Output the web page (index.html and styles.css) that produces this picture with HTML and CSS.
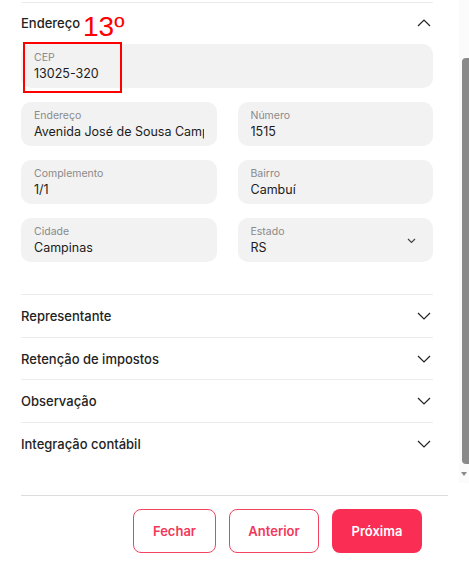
FILE: index.html
```html
<!DOCTYPE html>
<html lang="pt-BR">
<head>
  <meta charset="UTF-8" />
  <title>Cadastro - Endereço</title>
  <link rel="stylesheet" href="styles.css">
</head>
<body>
  <div class="panel">
    <!-- Endereço -->
    <section class="group open">
      <div class="group-head">
        <span>Endereço</span>
        <svg class="chev" width="14" height="8" viewBox="0 0 14 8"><path d="M1 7 L7 1 L13 7" fill="none" stroke="#222" stroke-width="1.2"/></svg>
      </div>
      <div class="fields">
        <div class="field full">
          <label>CEP</label>
          <div class="value">13025-320</div>
        </div>
        <div class="field">
          <label>Endereço</label>
          <div class="value">Avenida José de Sousa Campos</div>
        </div>
        <div class="field">
          <label>Número</label>
          <div class="value">1515</div>
        </div>
        <div class="field">
          <label>Complemento</label>
          <div class="value">1/1</div>
        </div>
        <div class="field">
          <label>Bairro</label>
          <div class="value">Cambuí</div>
        </div>
        <div class="field">
          <label>Cidade</label>
          <div class="value">Campinas</div>
        </div>
        <div class="field select">
          <label>Estado</label>
          <div class="value">RS</div>
          <svg class="select-chev" width="9" height="6" viewBox="0 0 9 6"><path d="M1 1 L4.5 4.5 L8 1" fill="none" stroke="#444" stroke-width="1.2"/></svg>
        </div>
      </div>
      <div class="mark"></div>
      <div class="mark-num">13º</div>
    </section>

    <section class="group"><div class="group-head"><span>Representante</span><svg class="chev" width="14" height="8" viewBox="0 0 14 8"><path d="M1 1 L7 7 L13 1" fill="none" stroke="#222" stroke-width="1.2"/></svg></div></section>
    <section class="group"><div class="group-head"><span>Retenção de impostos</span><svg class="chev" width="14" height="8" viewBox="0 0 14 8"><path d="M1 1 L7 7 L13 1" fill="none" stroke="#222" stroke-width="1.2"/></svg></div></section>
    <section class="group"><div class="group-head"><span>Observação</span><svg class="chev" width="14" height="8" viewBox="0 0 14 8"><path d="M1 1 L7 7 L13 1" fill="none" stroke="#222" stroke-width="1.2"/></svg></div></section>
    <section class="group"><div class="group-head"><span>Integração contábil</span><svg class="chev" width="14" height="8" viewBox="0 0 14 8"><path d="M1 1 L7 7 L13 1" fill="none" stroke="#222" stroke-width="1.2"/></svg></div></section>

    <div class="scrollbar">
      <div class="thumb"></div>
      <div class="arrow"></div>
    </div>
  </div>

  <footer>
    <button class="btn outline">Fechar</button>
    <button class="btn outline wide">Anterior</button>
    <button class="btn solid wide">Próxima</button>
  </footer>
</body>
</html>
```

FILE: styles.css
```css
* { box-sizing: border-box; }
body {
  margin: 0;
  font-family: Inter, "Noto Sans", sans-serif;
  color: #222;
  background: #fff;
}
.panel {
  position: relative;
  height: 483px;
  overflow: hidden;
  padding: 2px 36px 0 21px;
}
.group {
  position: relative;
  border-top: 1px solid #ececec;
}
.group-head {
  display: flex;
  align-items: center;
  justify-content: space-between;
  height: 41.7px;
  font-size: 13px;
  font-weight: 500;
  padding-right: 2px;
}
.group.open .group-head {
  height: 39px;
  margin-bottom: 2px;
}
.chev { display: block; }
.fields {
  display: grid;
  grid-template-columns: 1fr 1fr;
  column-gap: 21px;
  row-gap: 14px;
  padding-bottom: 32px;
}
.field {
  position: relative;
  background: #f2f2f2;
  border-radius: 10px;
  height: 44px;
  padding: 7px 13px 0 13px;
  overflow: hidden;
}
.field.full { grid-column: 1 / 3; }
.field label {
  display: block;
  font-size: 10.5px;
  line-height: 14px;
  color: #8a8a8a;
}
.field .value {
  font-size: 12.5px;
  line-height: 17px;
  color: #1c1c1c;
  white-space: nowrap;
  overflow: hidden;
}
.select-chev {
  position: absolute;
  right: 17px;
  top: 20px;
}
.mark {
  position: absolute;
  left: 2px;
  top: 39px;
  width: 99px;
  height: 51px;
  border: 2px solid #f00;
}
.mark-num {
  position: absolute;
  left: 62px;
  top: 8px;
  font-family: "Liberation Sans", Arial, sans-serif;
  font-size: 28px;
  line-height: 32px;
  color: #f00;
}
.scrollbar {
  position: absolute;
  right: 0;
  top: 0;
  width: 10px;
  height: 483px;
  background: #fbfbfb;
}
.thumb {
  position: absolute;
  right: 0;
  top: 58px;
  width: 7px;
  height: 406px;
  background: #8a8a8a;
  border-radius: 4px 0 0 4px;
}
.arrow {
  position: absolute;
  right: 2px;
  top: 472px;
  border-left: 3px solid transparent;
  border-right: 3px solid transparent;
  border-top: 4px solid #8a8a8a;
}
footer {
  margin: 12px 21px 0 21px;
  border-top: 1px solid #dcdcdc;
  padding: 13px 26px 0 0;
  display: flex;
  justify-content: flex-end;
  gap: 13px;
}
.btn {
  height: 44px;
  width: 83px;
  border-radius: 8px;
  font-family: Inter, "Noto Sans", sans-serif;
  font-size: 13px;
  font-weight: 600;
  cursor: pointer;
}
.btn.wide { width: 90px; }
.btn.outline {
  background: #fff;
  border: 1px solid #f04460;
  color: #f2385a;
}
.btn.solid {
  background: #fa2d55;
  border: none;
  color: #fff;
}
```
